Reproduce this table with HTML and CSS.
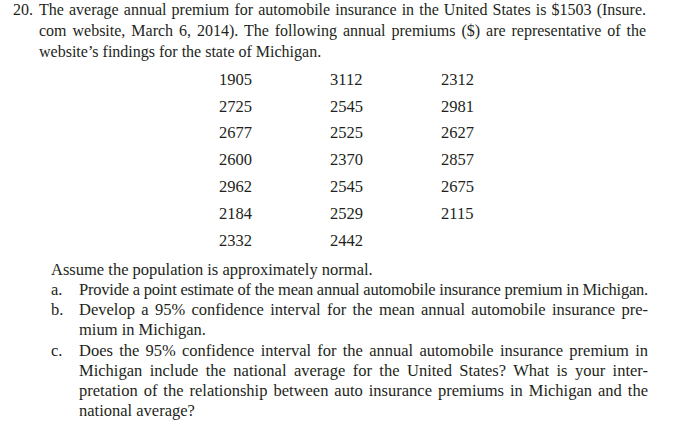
FILE: index.html
```html
<!DOCTYPE html>
<html lang="en">
<head>
<meta charset="utf-8">
<title>Exercise 20</title>
<link rel="stylesheet" href="styles.css">
</head>
<body>
<div class="page">
  <div class="problem">
    <span class="num">20.</span>
    <p class="stem">
      <span class="ln">The average annual premium for automobile insurance in the United States is $1503 (Insure.</span>
      <span class="ln">com website, March 6, 2014). The following annual premiums ($) are representative of the</span>
      <span class="ln last">website’s findings for the state of Michigan.</span>
    </p>
  </div>
  <div class="data">
    <span>1905</span><span>3112</span><span>2312</span>
    <span>2725</span><span>2545</span><span>2981</span>
    <span>2677</span><span>2525</span><span>2627</span>
    <span>2600</span><span>2370</span><span>2857</span>
    <span>2962</span><span>2545</span><span>2675</span>
    <span>2184</span><span>2529</span><span>2115</span>
    <span>2332</span><span>2442</span><span></span>
  </div>
  <div class="parts">
    <p class="lead">Assume the population is approximately normal.</p>
    <div class="part">
      <span class="lbl">a.</span>
      <p class="ptext"><span class="ln tight">Provide a point estimate of the mean annual automobile insurance premium in Michigan.</span></p>
    </div>
    <div class="part">
      <span class="lbl">b.</span>
      <p class="ptext">
        <span class="ln">Develop a 95% confidence interval for the mean annual automobile insurance pre-</span>
        <span class="ln last">mium in Michigan.</span>
      </p>
    </div>
    <div class="part">
      <span class="lbl">c.</span>
      <p class="ptext">
        <span class="ln">Does the 95% confidence interval for the annual automobile insurance premium in</span>
        <span class="ln">Michigan include the national average for the United States? What is your inter-</span>
        <span class="ln">pretation of the relationship between auto insurance premiums in Michigan and the</span>
        <span class="ln last">national average?</span>
      </p>
    </div>
  </div>
</div>
</body>
</html>
```
FILE: styles.css
```css
html, body {
  margin: 0;
  padding: 0;
  background: #ffffff;
}
body {
  font-family: "Liberation Serif", "Times New Roman", serif;
  color: #231f20;
}
.page {
  width: 700px;
  height: 425px;
  overflow: hidden;
}
p { margin: 0; }
.ln {
  display: block;
  white-space: nowrap;
  text-align: justify;
  text-align-last: justify;
}
.ln.last {
  text-align-last: left;
}
.ln.tight {
  letter-spacing: -0.22px;
  word-spacing: -1.5px;
}
.problem {
  display: flex;
  padding-left: 13px;
  width: 633px;
  font-size: 16px;
  line-height: 20.8px;
}
.num {
  flex: 0 0 26px;
}
.stem {
  flex: 1;
}
.data {
  display: grid;
  grid-template-columns: 111px 111px 60px;
  grid-auto-rows: 26.8px;
  margin-top: 4.5px;
  padding-left: 219px;
  font-size: 16.5px;
  line-height: 26.8px;
}
.parts {
  margin-top: 5.5px;
  padding-left: 51px;
  width: 597px;
  font-size: 16.5px;
  line-height: 20.15px;
}
.part {
  display: flex;
}
.lbl {
  flex: 0 0 28px;
}
.ptext {
  flex: 1;
}
```
